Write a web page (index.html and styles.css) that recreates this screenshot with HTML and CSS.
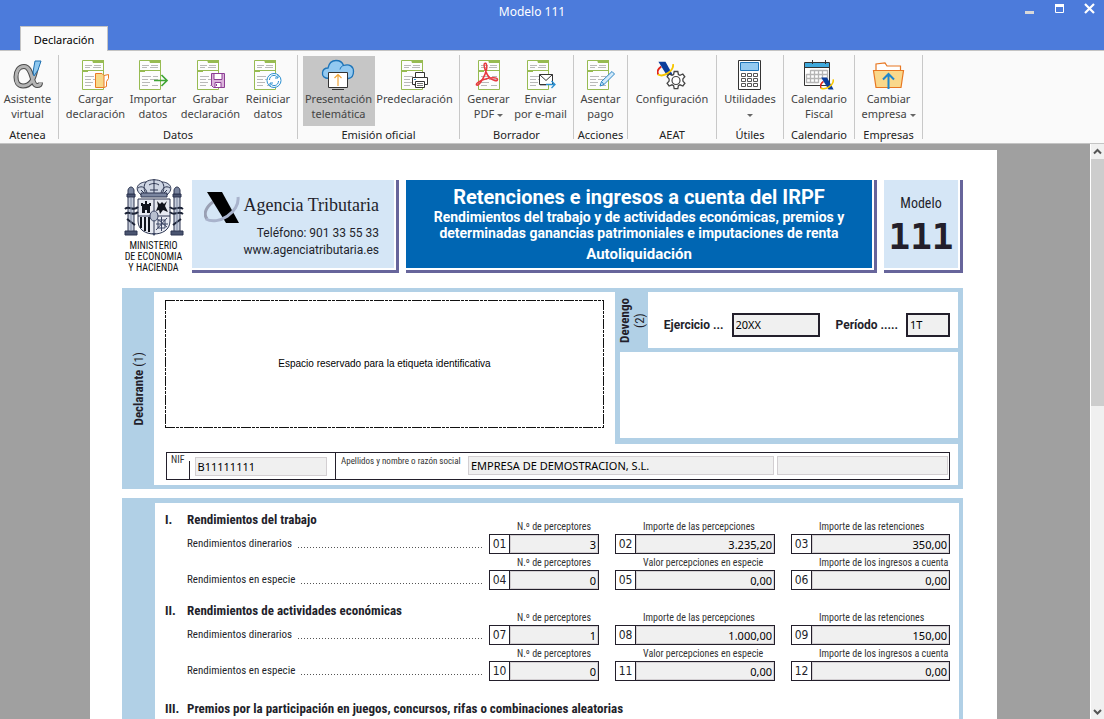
FILE: index.html
```html
<!DOCTYPE html>
<html lang="es">
<head>
<meta charset="utf-8">
<title>Modelo 111</title>
<link rel="stylesheet" href="styles.css">
</head>
<body>
<svg class="defs" aria-hidden="true">
  <symbol id="doc" viewBox="0 0 22 30">
    <path d="M.5.5h21v29H.5z" fill="#fdfdfd" stroke="#97bb52"/>
    <path d="M10 0h12v3H11zM0 10h22v1H6v1H0z" fill="#97bb52"/>
    <path d="M3 5.500h7M3 7.500h5M12 5.500h7M11 7.500h8M3 16.500h9M14 16.500h5M3 19.500h6M11 19.500h8M3 22.500h8M3 25.500h6M13 25.500h6" stroke="#b9b9b9"/>
  </symbol>
  <symbol id="aeat" viewBox="0 0 36 33">
    <path d="M9 11C2 16-1 23 3 28" fill="none" class="aeat-left"/>
    <path d="M3 1h15l17 31H22z" class="aeat-bar"/>
    <path d="M2 28c12 7 34-7 32-22" fill="none" class="aeat-right"/>
  </symbol>
</svg>

<header class="titlebar">
  <div class="titlebar__row">
    <h1 class="titlebar__title">Modelo 111</h1>
    <div class="titlebar__controls">
      <button class="winbtn" aria-label="Minimizar"><svg width="11" height="11"><path d="M1 8h9v3H1z" fill="#d8d8d8"/></svg></button>
      <button class="winbtn" aria-label="Maximizar"><svg width="11" height="11"><path d="M1.500 1.500h8v8h-8z" fill="none" stroke="#fff"/><path d="M1 1h9v3H1z" fill="#fff"/></svg></button>
      <button class="winbtn" aria-label="Cerrar"><svg width="11" height="11"><path d="M1 1l9 9M10 1l-9 9" stroke="#fff" stroke-width="2.200"/></svg></button>
    </div>
  </div>
  <nav class="tabs"><button class="tab">Declaración</button></nav>
</header>

<div class="ribbon">
  <section class="group group--atenea">
    <div class="group__buttons">
      <button class="tool">
        <svg class="tool__icon" viewBox="0 0 28 30"><g fill="none"><path d="M22 9C20 19 17 26 9 26 4 26 2 22 2 17 2 11 5 6.500 10 6.500c9 0 7 19 13 19 2 0 3.500-1 3.500-3" stroke="#4a4a4a" stroke-width="5"/><path d="M22 9C20 19 17 26 9 26 4 26 2 22 2 17 2 11 5 6.500 10 6.500c9 0 7 19 13 19 2 0 3.500-1 3.500-3" stroke="#b4b4b4" stroke-width="3"/></g><path d="M21 1h6l-3 9-4 6-1-4z" fill="#8fc8ef" stroke="#1d6fb0"/></svg>
        <span>Asistente<br>virtual</span></button>
    </div>
    <h2 class="group__name">Atenea</h2>
  </section>
  <section class="group group--datos">
    <div class="group__buttons">
      <button class="tool tool--wide">
        <svg class="tool__icon" viewBox="0 0 28 30"><use href="#doc" width="22" height="30"/><path d="M22 15.500l4.500-1v4l-2 3v5l-2.500 1" fill="#fff" stroke="#ea7a24"/><path d="M13.500 13.500h6.500l2 2v12h-8.500z" fill="#f8d888" stroke="#ea7a24"/></svg>
        <span>Cargar<br>declaración</span></button>
      <button class="tool">
        <svg class="tool__icon" viewBox="0 0 28 30"><use href="#doc" width="22" height="30"/><path d="M15 20.500h13M22.500 15l5.500 5.500-5.500 5.500" fill="none" stroke="#3fa535" stroke-width="1.700"/></svg>
        <span>Importar<br>datos</span></button>
      <button class="tool tool--wide">
        <svg class="tool__icon" viewBox="0 0 28 30"><use href="#doc" width="22" height="30"/><path d="M14.500 13.500h13v14h-11l-2-2z" fill="#dcb4dc" stroke="#8c3f95"/><path d="M17 13.500h8v6h-8zM18 22.500h6v5h-6z" fill="#fff" stroke="#8c3f95"/><path d="M19 24h1v2h-1z" fill="#8c3f95"/></svg>
        <span>Grabar<br>declaración</span></button>
      <button class="tool">
        <svg class="tool__icon" viewBox="0 0 28 30"><use href="#doc" width="22" height="30"/><circle cx="20" cy="20.500" r="7" fill="#fff" stroke="#2b8fd0"/><path d="M15.500 20c0-5 6-6 8-2.500M24 15v3h-3M24.500 21c0 5-6 6-8 2.500M16 26v-3h3" fill="none" stroke="#2b8fd0"/></svg>
        <span>Reiniciar<br>datos</span></button>
    </div>
    <h2 class="group__name">Datos</h2>
  </section>
  <section class="group group--emision">
    <div class="group__buttons">
      <button class="tool tool--pressed">
        <svg class="tool__icon" viewBox="0 0 28 30"><path d="M4 18.500C-1 18.500-3 16-2.500 12.500-2 9.500 0 8 3 8 4 3 7 .5 11 .5c4 0 6.500 2 7.500 5 6-2 10 1 10 6 0 4-2 6.500-5 7z" fill="#93c9f0" stroke="#1e74b8" stroke-width="1.300"/><path d="M18.500 5.500c-2 .5-3 2-3.500 4" fill="none" stroke="#1e74b8"/><path d="M3.500 12.500h19v15h-19z" fill="#fff" stroke="#333"/><path d="M7 29.500h12" stroke="#333"/><path d="M13 26V14.500M9.500 18l3.500-3.500 3.500 3.500" fill="none" stroke="#f0a63a" stroke-width="1.200"/></svg>
        <span>Presentación<br>telemática</span></button>
      <button class="tool tool--xwide">
        <svg class="tool__icon" viewBox="0 0 28 30"><use href="#doc" width="22" height="30"/><path d="M14.500 18v-5.500h9V18" fill="#fff" stroke="#333"/><path d="M11.500 17.500h15v7h-15z" fill="#fff" stroke="#333"/><path d="M14.500 21.500h9v6h-9z" fill="#fff" stroke="#333"/><path d="M16 23.500h6M16 25.500h6" stroke="#777"/><path d="M13 19.500h2" stroke="#2b8fd0"/></svg>
        <span>Predeclaración</span></button>
    </div>
    <h2 class="group__name">Emisión oficial</h2>
  </section>
  <section class="group group--borrador">
    <div class="group__buttons">
      <button class="tool tool--narrow">
        <svg class="tool__icon" viewBox="0 0 28 30"><use href="#doc" x="3" width="22" height="30"/><path d="M1.500 25c-1-2 5-5 9-6 5-1.500 12-2 12 .5s-5 1-8-2C11.500 15 8 5 9.500 3.500s3 2 2 6C10.500 15 4 27 1.500 25z" fill="none" stroke="#e8393f" stroke-width="1.500"/></svg>
        <span>Generar<br>PDF <i class="caret"></i></span></button>
      <button class="tool tool--mail">
        <svg class="tool__icon" viewBox="0 0 28 30"><use href="#doc" width="22" height="30"/><path d="M12.500 14.500h13v10h-13z" fill="#fff" stroke="#333"/><path d="M12.500 14.500l6.500 6 6.500-6" fill="none" stroke="#333"/><path d="M19 24.500h9M24.500 21l3.500 3.500-3.500 3.500" fill="none" stroke="#2b8fd0" stroke-width="1.300"/></svg>
        <span>Enviar<br>por e-mail</span></button>
    </div>
    <h2 class="group__name">Borrador</h2>
  </section>
  <section class="group group--acciones">
    <div class="group__buttons">
      <button class="tool">
        <svg class="tool__icon" viewBox="0 0 28 30"><use href="#doc" width="22" height="30"/><path d="M13 26l1.500-4.500L25 11.500l2.500 2.500L17 24.500zM14.500 21.500l2.500 3" fill="#d3eafa" stroke="#2b86c5"/></svg>
        <span>Asentar<br>pago</span></button>
    </div>
    <h2 class="group__name">Acciones</h2>
  </section>
  <section class="group group--aeat">
    <div class="group__buttons">
      <button class="tool tool--xwide">
        <svg class="tool__icon" viewBox="0 0 28 30"><use class="aeat--color" href="#aeat" x="-1" y="1" width="17" height="16"/><path d="M16.200 11.500h3.600l.6 3 1.600.8 2.800-1.300 2 2.800-1.900 2.100v2.200l2 2.100-2 2.800-2.900-1.200-1.600.9-.6 3h-3.600l-.6-3-1.600-.9-2.900 1.200-2-2.800 2-2.100v-2.200l-2-2.100 2-2.800 2.900 1.300 1.600-.8z" fill="#fff" stroke="#444" stroke-width="1.300"/><circle cx="18" cy="20.500" r="4" fill="#fff" stroke="#444" stroke-width="1.200"/></svg>
        <span>Configuración</span></button>
    </div>
    <h2 class="group__name">AEAT</h2>
  </section>
  <section class="group group--utiles">
    <div class="group__buttons">
      <button class="tool tool--wide">
        <svg class="tool__icon" viewBox="0 0 28 30"><path d="M2.500.5h22v29h-22z" fill="#fff" stroke="#333"/><path d="M4.500 2.500h18v8h-18z" fill="#93c9f0" stroke="#1e74b8"/><g fill="#fff" stroke="#555"><path d="M5.500 13.500h4v3h-4zM11.500 13.500h4v3h-4zM17.500 13.500h4v3h-4zM5.500 18.500h4v3h-4zM11.500 18.500h4v3h-4zM17.500 18.500h4v3h-4zM5.500 23.500h4v3h-4zM11.500 23.500h4v3h-4zM17.500 23.500h4v3h-4z"/></g></svg>
        <span>Utilidades<br><i class="caret"></i></span></button>
    </div>
    <h2 class="group__name">Útiles</h2>
  </section>
  <section class="group group--calendario">
    <div class="group__buttons">
      <button class="tool tool--wide">
        <svg class="tool__icon" viewBox="0 0 28 30"><path d="M-.5 2.500h25v23h-25z" fill="#fff" stroke="#333"/><path d="M0 3h24v4H0z" fill="#3fa9dc"/><path d="M0 7.500h24M7.500 0v4M20.500 0v4" stroke="#333"/><path d="M5.500 10.500h17M1.500 14.500h21M1.500 18.500h21M1.500 22.500h12M1.500 14v9M5.500 10v13M9.500 10v13M13.500 10v13M17.500 10v9M22.500 10v9" stroke="#b5b5b5" stroke-width="1.300"/><use class="aeat--color" href="#aeat" x="15" y="17" width="14" height="13"/></svg>
        <span>Calendario<br>Fiscal</span></button>
    </div>
    <h2 class="group__name">Calendario</h2>
  </section>
  <section class="group group--empresas">
    <div class="group__buttons">
      <button class="tool tool--wide">
        <svg class="tool__icon" viewBox="0 0 28 30"><path d="M1 15V4l9-1 2 3h13.500v9" fill="#fff" stroke="#e87722" stroke-width="1.200"/><path d="M-1.500 10.500h30l-2.500 17H1z" fill="#f9d88b" stroke="#e87722" stroke-width="1.200"/><path d="M13.500 29V14.500M8 19.500l5.500-5.500 5.500 5.500" fill="none" stroke="#1e86cc" stroke-width="2"/></svg>
        <span>Cambiar<br>empresa <i class="caret"></i></span></button>
    </div>
    <h2 class="group__name">Empresas</h2>
  </section>
</div>

<div class="workspace">
  <main class="paper">
    <div class="head">
      <div class="ministry">
        <svg class="ministry__arms" viewBox="0 0 60 58" role="img" aria-label="Escudo de España">
          <g fill="#cfd6e4" stroke="#2c3550" stroke-width="1">
            <path d="M17 17C9 10 15 4 22 4c3-3 13-3 16 0 7 0 13 6 5 13z"/>
            <path d="M30 1v15M22 4c-3 4-2 8 0 12M38 4c3 4 2 8 0 12M14 10c4-3 8 0 9 5M46 10c-4-3-8 0-9 5M25 7c3-2 7-2 10 0M26 12h8M17 12l3 3M43 12l-3 3" fill="none"/>
            <path d="M17 15h26v4H17z" fill="#7a859f"/>
            <path d="M4 17h6v38H4zM50 17h6v38h-6z" fill="#c6cddb"/>
            <path d="M3 16h8v3H3zM49 16h8v3h-8zM1 53h12v4H1zM47 53h12v4H47z" fill="#4a5470"/>
            <path d="M4 12c1-4 5-4 6 0v4H4zM50 12c1-4 5-4 6 0v4h-6z" fill="#7a859f"/>
            <path d="M14 21h32v22c0 9-8 13-16 13s-16-4-16-13z" fill="#e6e9f1"/>
            <path d="M14 38h32M30 21v34" fill="none"/>
          </g>
          <g fill="#10131c">
            <path d="M18 35v-7h-1v-3h2v1h2v-3h2v3h2v-1h2v3h-1v7h-3v-3h-2v3zM33 23l3 3 2-2 2 2 3-3-2 5 3 6-5-2-3 4-1-4-3 1 2-5z"/>
            <path d="M16 39h2v11h-2zM20 39h2v14h-2zM24 39h2v15h-2z"/>
          </g>
          <g fill="none" stroke="#3a4462">
            <path d="M32 40l11 9M43 40L32 52M37.500 39v14M32 46h12M34 42h7v8h-7z"/>
            <path d="M1 31c4-4 8 3 13-2M1 36c4-4 8 3 13-2M46 29c4 5 8-2 13 2M46 34c4 5 8-2 13 2M3 41l8 6M57 41l-8 6" stroke="#1d2438" stroke-width="2"/>
            <path d="M7 20v32M53 20v32" stroke="#7f8aa5"/>
          </g>
          <ellipse cx="30" cy="38" rx="4" ry="5" fill="#b8c0d0" stroke="#3a4462"/>
          <path d="M28 55h4l-2 3z" fill="#3a4462"/>
        </svg>
        <p class="ministry__name">MINISTERIO<br>DE ECONOMIA<br>Y HACIENDA</p>
      </div>
      <div class="frame frame--agency">
        <div class="agency">
          <div class="agency__brand">
            <svg class="aeat--mono agency__logo" role="img" aria-label="Agencia Tributaria"><use href="#aeat" width="36" height="33"/></svg>
            <span class="agency__name">Agencia Tributaria</span>
          </div>
          <p class="agency__contact">Teléfono: 901 33 55 33<br>www.agenciatributaria.es</p>
        </div>
      </div>
      <div class="frame frame--title">
        <div class="doctitle">
          <h2 class="doctitle__main">Retenciones e ingresos a cuenta del IRPF</h2>
          <p class="doctitle__sub">Rendimientos del trabajo y de actividades económicas, premios y<br>determinadas ganancias patrimoniales e imputaciones de renta</p>
          <p class="doctitle__kind">Autoliquidación</p>
        </div>
      </div>
      <div class="frame frame--model">
        <div class="model"><span class="model__label">Modelo</span><strong class="model__number">111</strong></div>
      </div>
    </div>

    <section class="declarant">
      <h3 class="side side--declarant"><span>Declarante <small>(1)</small></span></h3>
      <div class="declarant__body">
        <div class="declarant__top">
          <div class="sticker">Espacio reservado para la etiqueta identificativa</div>
          <div class="accrual">
            <div class="accrual__row">
              <h3 class="side side--accrual"><span>Devengo<br><small>(2)</small></span></h3>
              <div class="accrual__fields">
                <label class="strong" for="ejercicio">Ejercicio ...</label>
                <input class="box box--year" id="ejercicio" value="20XX" readonly>
                <label class="strong strong--period" for="periodo">Período .....</label>
                <input class="box box--period" id="periodo" value="1T" readonly>
              </div>
            </div>
            <div class="accrual__blank"></div>
          </div>
        </div>
        <div class="identity">
          <div class="identity__nif">
            <label class="caption" for="nif">NIF</label>
            <div class="identity__cell"><input class="soft" id="nif" value="B11111111" readonly></div>
          </div>
          <div class="identity__name">
            <label class="caption" for="nombre">Apellidos y nombre o razón social</label>
            <input class="soft soft--name" id="nombre" value="EMPRESA DE DEMOSTRACION, S.L." readonly>
            <input class="soft soft--extra" aria-label="Nombre" readonly>
          </div>
        </div>
      </div>
    </section>

    <section class="settlement">
      <div class="block">
        <div class="line line--first">
          <div class="concept"><h3 class="concept__title"><span class="concept__num">I.</span>Rendimientos del trabajo</h3><p class="concept__text">Rendimientos dinerarios <span class="dots"></span></p></div>
          <div class="field"><label class="caption" for="c01">N.º de perceptores</label><div class="field__box"><span class="field__num">01</span><input id="c01" value="3" readonly></div></div>
          <div class="field"><label class="caption" for="c02">Importe de las percepciones</label><div class="field__box"><span class="field__num">02</span><input id="c02" value="3.235,20" readonly></div></div>
          <div class="field"><label class="caption" for="c03">Importe de las retenciones</label><div class="field__box"><span class="field__num">03</span><input id="c03" value="350,00" readonly></div></div>
        </div>
        <div class="line">
          <div class="concept"><p class="concept__text">Rendimientos en especie <span class="dots"></span></p></div>
          <div class="field"><label class="caption" for="c04">N.º de perceptores</label><div class="field__box"><span class="field__num">04</span><input id="c04" value="0" readonly></div></div>
          <div class="field"><label class="caption" for="c05">Valor percepciones en especie</label><div class="field__box"><span class="field__num">05</span><input id="c05" value="0,00" readonly></div></div>
          <div class="field"><label class="caption" for="c06">Importe de los ingresos a cuenta</label><div class="field__box"><span class="field__num">06</span><input id="c06" value="0,00" readonly></div></div>
        </div>
      </div>
      <div class="block">
        <div class="line line--first">
          <div class="concept"><h3 class="concept__title"><span class="concept__num">II.</span>Rendimientos de actividades económicas</h3><p class="concept__text">Rendimientos dinerarios <span class="dots"></span></p></div>
          <div class="field"><label class="caption" for="c07">N.º de perceptores</label><div class="field__box"><span class="field__num">07</span><input id="c07" value="1" readonly></div></div>
          <div class="field"><label class="caption" for="c08">Importe de las percepciones</label><div class="field__box"><span class="field__num">08</span><input id="c08" value="1.000,00" readonly></div></div>
          <div class="field"><label class="caption" for="c09">Importe de las retenciones</label><div class="field__box"><span class="field__num">09</span><input id="c09" value="150,00" readonly></div></div>
        </div>
        <div class="line">
          <div class="concept"><p class="concept__text">Rendimientos en especie <span class="dots"></span></p></div>
          <div class="field"><label class="caption" for="c10">N.º de perceptores</label><div class="field__box"><span class="field__num">10</span><input id="c10" value="0" readonly></div></div>
          <div class="field"><label class="caption" for="c11">Valor percepciones en especie</label><div class="field__box"><span class="field__num">11</span><input id="c11" value="0,00" readonly></div></div>
          <div class="field"><label class="caption" for="c12">Importe de los ingresos a cuenta</label><div class="field__box"><span class="field__num">12</span><input id="c12" value="0,00" readonly></div></div>
        </div>
      </div>
      <h3 class="concept__title concept__title--last"><span class="concept__num">III.</span>Premios por la participación en juegos, concursos, rifas o combinaciones aleatorias</h3>
    </section>
  </main>
  <div class="scrollbar" aria-hidden="true">
    <svg class="scrollbar__arrow" viewBox="0 0 13 15"><path d="M3 9.500l3.500-3.500L10 9.500" fill="none" stroke="#555" stroke-width="2"/></svg>
    <div class="scrollbar__thumb"></div>
    <svg class="scrollbar__arrow scrollbar__arrow--down" viewBox="0 0 13 15"><path d="M3 6l3.500 3.500L10 6" fill="none" stroke="#555" stroke-width="2"/></svg>
  </div>
</div>
</body>
</html>
```
FILE: styles.css
```css
:root {
  --ui: "Noto Sans", "Open Sans", sans-serif;
  --form: "Roboto Condensed", Roboto, sans-serif;
  --ink: #231f2b;
  --pale: #b1d0e6;
  --light: #d5e6f6;
  --shade: #67659b;
}

* { box-sizing: border-box; }

body, h1, h2, h3, p { margin: 0; }

body {
  display: flex;
  flex-direction: column;
  height: 100vh;
  overflow: hidden;
  font-family: var(--ui);
  font-size: 11px;
  color: var(--ink);
}

button, input { font: inherit; color: inherit; margin: 0; }
button { border: 0; padding: 0; background: none; }
input { min-width: 0; border-radius: 0; outline: 0; }
.defs { position: absolute; width: 0; height: 0; }

/* Title bar */
.titlebar {
  display: flex;
  flex-direction: column;
  justify-content: space-between;
  height: 51px;
  background: #4c7bdb;
  border-bottom: 1px solid #c4c4c4;
}
.titlebar__row { display: flex; align-items: center; height: 24px; padding-left: 40px; }
.titlebar__title { flex: 1; text-align: center; font-size: 12px; font-weight: 400; line-height: 24px; color: #fff; }
.titlebar__controls { display: flex; gap: 18px; padding-right: 8px; }
.winbtn { width: 12px; height: 18px; display: grid; align-items: start; }
.tabs { display: flex; padding-left: 20px; }
.tab {
  height: 25px;
  width: 88px;
  margin-bottom: -1px;
  background: #fafafa;
  border: 1px solid #c4c4c4;
  border-bottom: 0;
  color: #000;
}

/* Ribbon */
.ribbon {
  display: flex;
  padding: 4px 0;
  background: #fafafa;
  border-bottom: 1px solid #c4c4c4;
}
.group {
  display: flex;
  flex-direction: column;
  flex: none;
  height: 84px;
  border-right: 1px solid #c8c8c8;
}
.group--atenea { width: 59px; padding-right: 3px; }
.group--datos { width: 239px; }
.group--emision { width: 162px; }
.group--borrador { width: 114px; }
.group--acciones { width: 54px; }
.group--aeat { width: 89px; }
.group--utiles { width: 67px; }
.group--calendario { width: 71px; }
.group--empresas { width: 68px; }
.group__buttons { display: flex; justify-content: center; height: 71px; padding-top: 1px; }
.group__name { font-size: 11px; font-weight: 400; line-height: 17px; text-align: center; color: #222; }
.tool {
  display: flex;
  flex-direction: column;
  align-items: center;
  gap: 1px;
  width: 50px;
  height: 70px;
  padding-top: 4px;
  line-height: 15px;
  white-space: nowrap;
  color: #444;
}
.tool--narrow { width: 48px; }
.tool--mail { width: 56px; }
.tool--wide { width: 65px; }
.tool--xwide { width: 80px; }
.tool--pressed { width: 72px; background: #c6c6c6; }
.tool__icon { flex: none; width: 28px; height: 30px; overflow: visible; }
.caret {
  display: inline-block;
  vertical-align: middle;
  border: 3px solid transparent;
  border-top-color: #666;
  border-bottom: 0;
}
.aeat--color { --bar: #0a3d9c; --left: #e2231a; --right: #f7c600; --stroke: 4; }
.aeat--mono { --bar: #000; --left: #9aa0b4; --right: #a9b3cc; --stroke: 3; }
.aeat-bar { fill: var(--bar); }
.aeat-left { stroke: var(--left); stroke-width: var(--stroke); }
.aeat-right { stroke: var(--right); stroke-width: var(--stroke); }

/* Workspace */
.workspace { display: flex; flex: 1; min-height: 0; background: #a0a0a0; }
.paper {
  flex: 1;
  margin: 6px 93px 0 90px;
  padding: 28px 34px 0 32px;
  background: #fff;
  overflow: hidden;
  font-family: var(--form);
}
.scrollbar {
  display: flex;
  flex-direction: column;
  width: 14px;
  background: #f0f0f0;
  border-left: 1px solid #fff;
}
.scrollbar__arrow { width: 13px; height: 15px; }
.scrollbar__arrow--down { margin-top: auto; }
.scrollbar__thumb { height: 247px; background: #cdcdcd; }

/* Form heading */
.head { display: flex; gap: 7px; align-items: flex-start; }
.ministry { width: 63px; text-align: center; }
.ministry__arms { display: block; width: 60px; height: 58px; margin: 0 auto 4px; }
.ministry__name { font-size: 10px; line-height: 11px; color: #111; white-space: nowrap; }
.frame {
  margin-top: 2px;
  padding: 0 2px 2px 0;
  border: solid var(--shade);
  border-width: 0 3px 3px 0;
}
.frame > div { height: 88px; }
.frame--agency { width: 207px; }
.frame--title { flex: 1; }
.frame--model { width: 79px; }
.agency { padding: 11px 15px 0 12px; background: var(--light); }
.agency__brand { display: flex; justify-content: space-between; height: 34px; }
.agency__logo { width: 36px; height: 33px; }
.agency__name { font: 18px/29px "Liberation Serif", serif; white-space: nowrap; }
.agency__contact { font-family: Roboto, sans-serif; font-size: 12px; line-height: 17px; text-align: right; white-space: nowrap; }
.doctitle { padding-top: 5px; background: #0066b3; color: #fff; text-align: center; font-weight: 700; white-space: nowrap; font-family: Roboto, sans-serif; }
.doctitle__main { font-size: 20px; line-height: 24px; }
.doctitle__sub { font-size: 14px; line-height: 16px; }
.doctitle__kind { margin-top: 4px; font-size: 15px; line-height: 19px; }
.model { display: flex; flex-direction: column; align-items: center; padding-top: 14px; background: var(--light); }
.model__label { font-size: 14px; line-height: 18px; }
.model__number { font: 700 36px/50px "DejaVu Sans Mono", monospace; }

/* Declarant */
.side { flex: none; display: grid; place-items: center; font-size: 13px; line-height: 15px; text-align: center; }
.side span { writing-mode: vertical-rl; rotate: 180deg; white-space: nowrap; }
.side small { font-size: inherit; font-weight: 400; }
.side--declarant { width: 32px; }
.side--accrual { width: 33px; }
.declarant {
  display: flex;
  margin-top: 15px;
  background: var(--pale);
  border: solid var(--pale);
  border-width: 4px 5px 4px 0;
}
.declarant__body { flex: 1; min-width: 0; background: #fff; padding-bottom: 5px; }
.declarant__top { display: flex; gap: 11px; height: 152px; padding-left: 11px; }
.sticker {
  --dash: #111 0 10px, transparent 0 11px, #111 0 14px, transparent 0 15px, #111 0 18px, transparent 0 19px;
  flex: 1;
  display: grid;
  place-items: center;
  height: 128px;
  margin-top: 8px;
  font: 10px/12px "Liberation Sans", sans-serif;
  color: #000;
  background:
    repeating-linear-gradient(90deg, var(--dash)) top / 100% 1px,
    repeating-linear-gradient(90deg, var(--dash)) bottom / 100% 1px,
    repeating-linear-gradient(180deg, var(--dash)) left / 1px 100%,
    repeating-linear-gradient(180deg, var(--dash)) right / 1px 100%;
  background-repeat: no-repeat;
}
.accrual { flex: none; display: flex; flex-direction: column; gap: 4px; width: 343px; padding-bottom: 6px; background: var(--pale); }
.accrual__row { display: flex; height: 56px; }
.accrual__fields { flex: 1; display: flex; align-items: center; justify-content: flex-end; padding: 10px 8px 0 0; background: #fff; }
.accrual__blank { flex: 1; margin-left: 5px; background: #fff; }
.strong { font: 700 12px/16px Roboto, sans-serif; margin-right: 8px; white-space: nowrap; }
.strong--period { margin-left: 16px; }
.box { height: 24px; padding: 0 2px 2px; border: 2px solid var(--ink); background: #f0f0f0; font-family: var(--ui); color: #000; }
.box--year { width: 88px; }
.box--period { width: 44px; }
.identity { display: flex; height: 28px; margin: 8px 8px 0 12px; border: 1px solid var(--ink); }
.identity__nif { display: flex; width: 169px; padding-left: 4px; border-right: 1px solid var(--ink); }
.identity__cell { flex: 1; display: flex; align-items: flex-end; margin: 8px 8px 0 4px; padding-left: 5px; border-left: 1px solid var(--ink); }
.identity__nif .soft { width: 100%; margin-bottom: 3px; }
.identity__name { flex: 1; display: flex; gap: 3px; padding: 3px 1px 0 5px; }
.caption { font-size: 10px; line-height: 14px; color: #333; white-space: nowrap; }
.identity__name .caption { flex: 1; font-size: 9px; line-height: 11px; }
.soft { height: 19px; padding: 0 2px; border: 1px solid #d3cfd2; background: #f0f0f0; font-family: var(--ui); color: #000; }
.soft--name { width: 306px; }
.soft--extra { width: 171px; }

/* Settlement */
.settlement {
  margin-top: 9px;
  padding: 9px 9px 40px 10px;
  border: solid var(--pale);
  border-width: 5px 4px 5px 33px;
}
.block { margin-bottom: 13px; }
.line {
  display: grid;
  grid-template-columns: minmax(0, 1fr) 110px 160px 159px;
  column-gap: 16px;
  align-items: end;
  height: 36px;
}
.line--first { height: 42px; }
.concept { margin-right: -9px; }
.concept__title { display: flex; margin-bottom: 6px; font-size: 13px; line-height: 16px; white-space: nowrap; }
.concept__title--last { margin-top: 20px; }
.concept__num { flex: none; width: 22px; }
.concept__text { display: flex; align-items: center; gap: 6px; padding-left: 22px; font-size: 11px; line-height: 20px; white-space: nowrap; }
.dots { flex: 1; height: 1px; margin-top: 7px; background: repeating-linear-gradient(90deg, #555 0 1px, transparent 0 3px); }
.field { display: flex; flex-direction: column; }
.field .caption { padding-left: 28px; }
.field__box { display: flex; height: 20px; border: 1px solid var(--ink); }
.field__num { width: 20px; border-right: 1px solid var(--ink); text-align: center; font: 12px/18px "DejaVu Sans Condensed", "DejaVu Sans", sans-serif; }
.field__box input { flex: 1; width: 0; padding: 0 1px; border: 1px solid #d3cfd2; background: #f0f0f0; font-family: var(--ui); text-align: right; color: #000; }
```
